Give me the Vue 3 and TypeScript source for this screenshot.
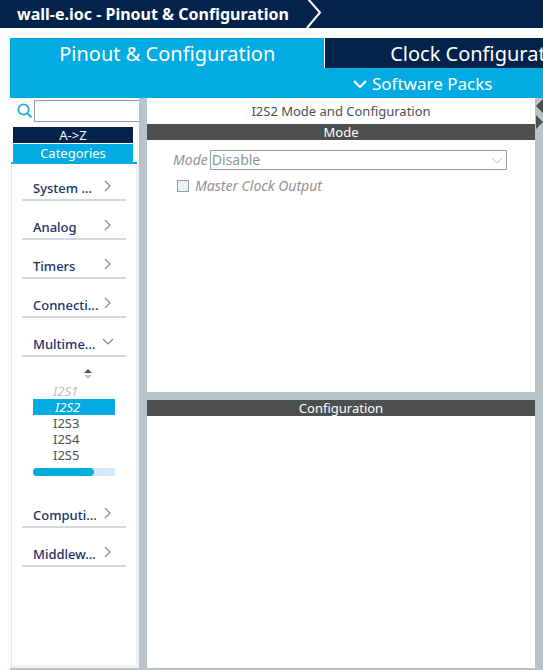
<script setup lang="ts">
import { ref } from 'vue'

interface Category {
  label: string
  items?: string[]
}

const categories: Category[] = [
  { label: 'System ...' },
  { label: 'Analog' },
  { label: 'Timers' },
  { label: 'Connecti...' },
  { label: 'Multime...', items: ['I2S1', 'I2S2', 'I2S3', 'I2S4', 'I2S5'] },
  { label: 'Computi...' },
  { label: 'Middlew...' },
]

const selected = ref('I2S2')
const unavailable = 'I2S1'
const search = ref('')
</script>

<template>
  <div class="app">
    <header class="crumbs">
      <h1>wall-e.ioc - Pinout &amp; Configuration</h1>
      <svg class="crumb-arrow" width="18" height="28" viewBox="0 0 18 28" aria-hidden="true">
        <path d="M2 -1 L14 12.500 L1 28" fill="none" stroke="#fff" stroke-width="2" />
      </svg>
    </header>

    <main class="main">
      <nav class="tabs">
        <button type="button" class="tab active">Pinout &amp; Configuration</button>
        <button type="button" class="tab">Clock Configuration</button>
      </nav>
      <div class="packs">
        <button type="button">
          <svg width="14" height="10" viewBox="0 0 14 10" aria-hidden="true">
            <path d="M1 2 L7 8 L13 2" fill="none" stroke="#fff" stroke-width="2" />
          </svg>
          Software Packs
        </button>
      </div>

      <div class="workspace">
        <aside class="side">
          <div class="search">
            <svg width="16" height="16" viewBox="0 0 16 16" aria-hidden="true">
              <circle cx="6.500" cy="6.500" r="5.200" fill="none" stroke="#1fb0e0" stroke-width="1.800" />
              <path d="M10 10 L14.500 14.500" stroke="#1fb0e0" stroke-width="2" />
            </svg>
            <input v-model="search" type="text" aria-label="Search" />
          </div>
          <div class="modes">
            <button type="button" class="mode-az">A-&gt;Z</button>
            <button type="button" class="mode-cat">Categories</button>
          </div>
          <div class="tree">
            <section v-for="cat in categories" :key="cat.label">
              <button type="button" class="category">
                <span>{{ cat.label }}</span>
                <svg width="12" height="12" viewBox="0 0 12 12" aria-hidden="true">
                  <path
                    :d="cat.items ? 'M1 3 L6 8 L11 3' : 'M3 1 L8 6 L3 11'"
                    fill="none"
                    stroke="#888"
                    stroke-width="1.200"
                  />
                </svg>
              </button>
              <div v-if="cat.items" class="peripherals">
                <svg class="sort" width="10" height="12" viewBox="0 0 10 12" aria-hidden="true">
                  <path d="M1 5 L5 1 L9 5 Z" fill="#555" />
                  <path d="M1 7 L5 11 L9 7 Z" fill="#c8c8c8" />
                </svg>
                <button
                  v-for="item in cat.items"
                  :key="item"
                  type="button"
                  class="peripheral"
                  :class="{ selected: item === selected, unavailable: item === unavailable }"
                  @click="selected = item"
                >
                  {{ item }}
                </button>
                <div class="scroll"><div class="thumb"></div></div>
              </div>
            </section>
          </div>
        </aside>

        <div class="panels">
          <section class="panel">
            <h2 class="title">I2S2 Mode and Configuration</h2>
            <h3 class="bar">Mode</h3>
            <div class="form">
              <div class="field">
                <label for="mode">Mode</label>
                <div class="select">
                  <select id="mode">
                    <option>Disable</option>
                  </select>
                  <svg width="12" height="8" viewBox="0 0 12 8" aria-hidden="true">
                    <path d="M1 1 L6 6 L11 1" fill="none" stroke="#bbb" />
                  </svg>
                </div>
              </div>
              <label class="check"><input type="checkbox" />Master Clock Output</label>
            </div>
          </section>
          <section class="panel">
            <h3 class="bar">Configuration</h3>
          </section>
        </div>

        <div class="splitter">
          <svg width="8" height="32" viewBox="0 0 8 32" aria-hidden="true">
            <path d="M8 1 L1 8 L8 15 Z M1 17 L8 24 L1 31 Z" fill="#4d504f" />
          </svg>
        </div>
      </div>
    </main>
  </div>
</template>

<style>
body {
  margin: 0;
  background: #fff;
}
</style>

<style scoped>
.app {
  display: flex;
  flex-direction: column;
  min-height: 100vh;
  overflow: hidden;
  font-family: "Noto Sans", "Open Sans", sans-serif;
  font-size: 13px;
  line-height: 16px;
  color: #4d504f;
}
.app * {
  box-sizing: border-box;
}
button,
input,
select {
  margin: 0;
  padding: 0;
  border: 0;
  border-radius: 0;
  background: none;
  font: inherit;
  color: inherit;
}
h1,
h2,
h3 {
  margin: 0;
}
.crumbs {
  display: flex;
  align-items: center;
  gap: 17px;
  height: 28px;
  padding-left: 17px;
  background: #03234b;
  color: #fff;
}
h1 {
  font-size: 16px;
  line-height: 28px;
  font-weight: 700;
  white-space: nowrap;
}
.main {
  flex: 1;
  display: flex;
  flex-direction: column;
  padding: 10px 0 0 10px;
}
.tabs {
  display: flex;
  gap: 1px;
  height: 30px;
  background: #fff;
}
.tab {
  flex: 0 0 59%;
  padding-top: 2px;
  background: #03234b;
  color: #fff;
  font-size: 20px;
  line-height: 28px;
  white-space: nowrap;
}
.tab.active {
  background: #03abe3;
}
.packs {
  height: 30px;
  padding-left: 343px;
  background: #03abe3;
  color: #fff;
}
.packs button {
  display: flex;
  align-items: center;
  gap: 5px;
  padding-top: 2px;
  font-size: 17px;
  line-height: 28px;
  white-space: nowrap;
}
.workspace {
  flex: 1;
  display: grid;
  grid-template-columns: 129px 1fr 8px;
  border-bottom: 2px solid #b7c4cc;
}
.side {
  display: flex;
  flex-direction: column;
  min-width: 0;
}
.search {
  display: flex;
  align-items: center;
  gap: 1px;
  height: 29px;
  padding: 0 0 5px 7px;
}
.search svg {
  flex: none;
  margin-top: 2px;
}
.search input {
  flex: 1;
  align-self: flex-end;
  min-width: 0;
  height: 22px;
  border: 1px solid #949ea8;
  border-right: 0;
}
.modes {
  display: flex;
  flex-direction: column;
  gap: 1px;
  margin: 0 2px 0 1px;
  padding: 0 4px 0 2px;
  border-bottom: 2px solid #03abe3;
  color: #fff;
}
.mode-az {
  height: 16px;
  background: #03234b;
}
.mode-cat {
  height: 18px;
  background: #03abe3;
}
.tree {
  flex: 1;
  margin-left: 1px;
  padding: 0 10px;
  border-left: 1px solid #e8ebed;
  border-right: 3px solid #f0f1f2;
  border-bottom: 3px solid #f0f1f2;
}
.category {
  display: flex;
  align-items: flex-end;
  justify-content: space-between;
  width: 104px;
  height: 39px;
  padding: 0 12px 3px 11px;
  border-bottom: 2px solid #d0d9df;
  color: #1c3068;
  font-weight: 500;
  text-align: left;
  white-space: nowrap;
}
section:first-child .category {
  height: 37px;
}
.category svg {
  flex: none;
  margin-bottom: 4px;
}
.peripherals {
  display: flex;
  flex-direction: column;
  width: 82px;
  height: 132px;
  margin-left: 11px;
  padding: 11px 0 12px;
}
.sort {
  margin: 0 0 3px 50px;
}
.peripheral {
  height: 16px;
  padding-left: 20px;
  text-align: left;
}
.unavailable {
  color: #b7c0c8;
  font-style: italic;
}
.selected {
  padding-left: 22px;
  background: #03abe3;
  color: #fff;
  font-style: italic;
}
.scroll {
  flex: none;
  height: 8px;
  margin-top: 5px;
  background: #d5e9f8;
}
.thumb {
  width: 74%;
  height: 8px;
  border-radius: 4px;
  background: #03abe3;
}
.panels {
  display: grid;
  grid-template-rows: 294fr 268fr;
  gap: 8px;
  min-width: 0;
  padding-left: 8px;
  background: #b7c4cc;
}
.panel {
  background: #fff;
}
.title {
  font-size: 13px;
  line-height: 26px;
  font-weight: 400;
  text-align: center;
}
.bar {
  height: 16px;
  background: #4d504f;
  color: #fff;
  font-size: 13px;
  line-height: 16px;
  font-weight: 400;
  text-align: center;
}
.form {
  padding: 10px 28px 0 26px;
  color: #939393;
  font-size: 14px;
  font-style: italic;
}
.field {
  display: flex;
  align-items: center;
  gap: 2px;
}
.select {
  position: relative;
  flex: 1;
}
.select select {
  display: block;
  width: 100%;
  height: 20px;
  padding-left: 1px;
  border: 1px solid #949ea8;
  appearance: none;
  color: #8a95a0;
  font-style: normal;
}
.select svg {
  position: absolute;
  top: 7px;
  right: 4px;
}
.check {
  display: flex;
  align-items: center;
  gap: 6px;
  margin-top: 8px;
  padding-left: 4px;
}
.check input {
  width: 12px;
  height: 12px;
  border: 1px solid #949ea8;
  background: #eef0f2;
  appearance: none;
}
.splitter {
  background: #b7c4cc;
}
.splitter svg {
  display: block;
}
</style>
